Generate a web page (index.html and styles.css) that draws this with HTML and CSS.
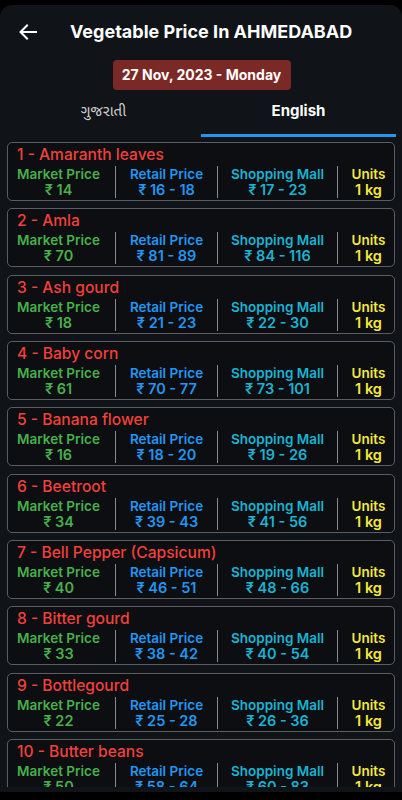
FILE: index.html
```html
<!DOCTYPE html>
<html lang="en">
<head>
  <meta charset="UTF-8" />
  <meta name="viewport" content="width=device-width, initial-scale=1" />
  <title>Vegetable Price</title>
  <link rel="stylesheet" href="styles.css">
</head>
<body>

<div class="screen">
  <div class="topbar">
    <button class="back" aria-label="Back">
      <svg width="18" height="16" viewBox="0 0 18 16" fill="none" stroke="#fff" stroke-width="2" stroke-linecap="square">
        <path d="M17 8H2M8 1.5L1.5 8L8 14.5" />
      </svg>
    </button>
    <h1 class="title">Vegetable Price In AHMEDABAD</h1>
  </div>

  <div class="date-row">
    <span class="date">27 Nov, 2023 - Monday</span>
  </div>

  <div class="tabs">
    <div class="tab">ગુજરાતી</div>
    <div class="tab active">English</div>
  </div>

  <div class="list" id="list"></div>
</div>

<script>
  const items = [
    ["Amaranth leaves", "14", "16 - 18", "17 - 23"],
    ["Amla", "70", "81 - 89", "84 - 116"],
    ["Ash gourd", "18", "21 - 23", "22 - 30"],
    ["Baby corn", "61", "70 - 77", "73 - 101"],
    ["Banana flower", "16", "18 - 20", "19 - 26"],
    ["Beetroot", "34", "39 - 43", "41 - 56"],
    ["Bell Pepper (Capsicum)", "40", "46 - 51", "48 - 66"],
    ["Bitter gourd", "33", "38 - 42", "40 - 54"],
    ["Bottlegourd", "22", "25 - 28", "26 - 36"],
    ["Butter beans", "50", "58 - 64", "60 - 83"]
  ];

  const list = document.getElementById("list");
  items.forEach((it, i) => {
    const card = document.createElement("div");
    card.className = "card";
    card.innerHTML =
      '<div class="name">' + (i + 1) + ' - ' + it[0] + '</div>' +
      '<div class="cols">' +
        '<div class="col market"><div>Market Price</div><div class="val">₹ ' + it[1] + '</div></div>' +
        '<div class="col retail"><div>Retail Price</div><div class="val">₹ ' + it[2] + '</div></div>' +
        '<div class="col mall"><div>Shopping Mall</div><div class="val">₹ ' + it[3] + '</div></div>' +
        '<div class="col units"><div>Units</div><div class="val">1 kg</div></div>' +
      '</div>';
    list.appendChild(card);
  });
</script>

</body>
</html>
```

FILE: styles.css
```css
html, body {
  margin: 0; padding: 0; height: 100%;
  overflow: hidden;
  background: #000;
  font-family: Inter, "Noto Sans", "Noto Sans Gujarati", sans-serif;
  color: white;
}

.screen {
  margin-top: 5px;
  height: 787px;
  background: #101317;
  border-radius: 12px 12px 0 0;
  display: flex;
  flex-direction: column;
}

.topbar {
  height: 52px;
  display: flex;
  align-items: center;
  padding-left: 19px;
}

.back {
  background: none;
  border: none;
  padding: 0;
  width: 18px;
  height: 16px;
  display: flex;
  margin-top: 2px;
}

.title {
  margin: 0 0 0 33px;
  font-size: 18px;
  font-weight: 700;
}

.date-row {
  display: flex;
  justify-content: center;
  margin-top: 3px;
}

.date {
  background: #7b2926;
  border-radius: 4px;
  height: 30px;
  line-height: 30px;
  width: 178px;
  text-align: center;
  font-size: 14px;
  font-weight: 700;
  margin-left: 1px;
}

.tabs {
  display: flex;
  margin: 0 6px;
  height: 47px;
}

.tab {
  flex: 1;
  text-align: center;
  line-height: 42px;
  font-size: 15px;
  color: #d0d0d0;
  box-sizing: border-box;
}

.tab.active {
  color: #fff;
  font-weight: 700;
  border-bottom: 3px solid #2196f3;
}

.list {
  flex: 1;
  min-height: 0;
  overflow: hidden;
  padding: 5px 7px 0;
  margin-bottom: 5px;
  display: flex;
  flex-direction: column;
  gap: 7.33px;
}

.card {
  flex-shrink: 0;
  border: 1px solid #5b5d60;
  border-radius: 5px;
  background: #0c0e11;
  padding: 1px 0 2px;
}

.name {
  color: #f2403a;
  font-size: 15.6px;
  font-weight: 500;
  line-height: 22px;
  padding-left: 9px;
}

.cols {
  display: grid;
  grid-template-columns: 107px 102px 120px 1fr;
  font-size: 13.5px;
  font-weight: 600;
  line-height: 16px;
}

.col {
  text-align: center;
  border-left: 1.5px solid #8a8a8a;
}

.col .val {
  font-size: 14.5px;
}

.col.market {
  border-left: none;
  padding-right: 6px;
  color: #47b04b;
}

.col.retail { color: #2196f3; }
.col.mall { color: #1ab3d1; }
.col.units { color: #f5e93c; padding-left: 5px; }
```
